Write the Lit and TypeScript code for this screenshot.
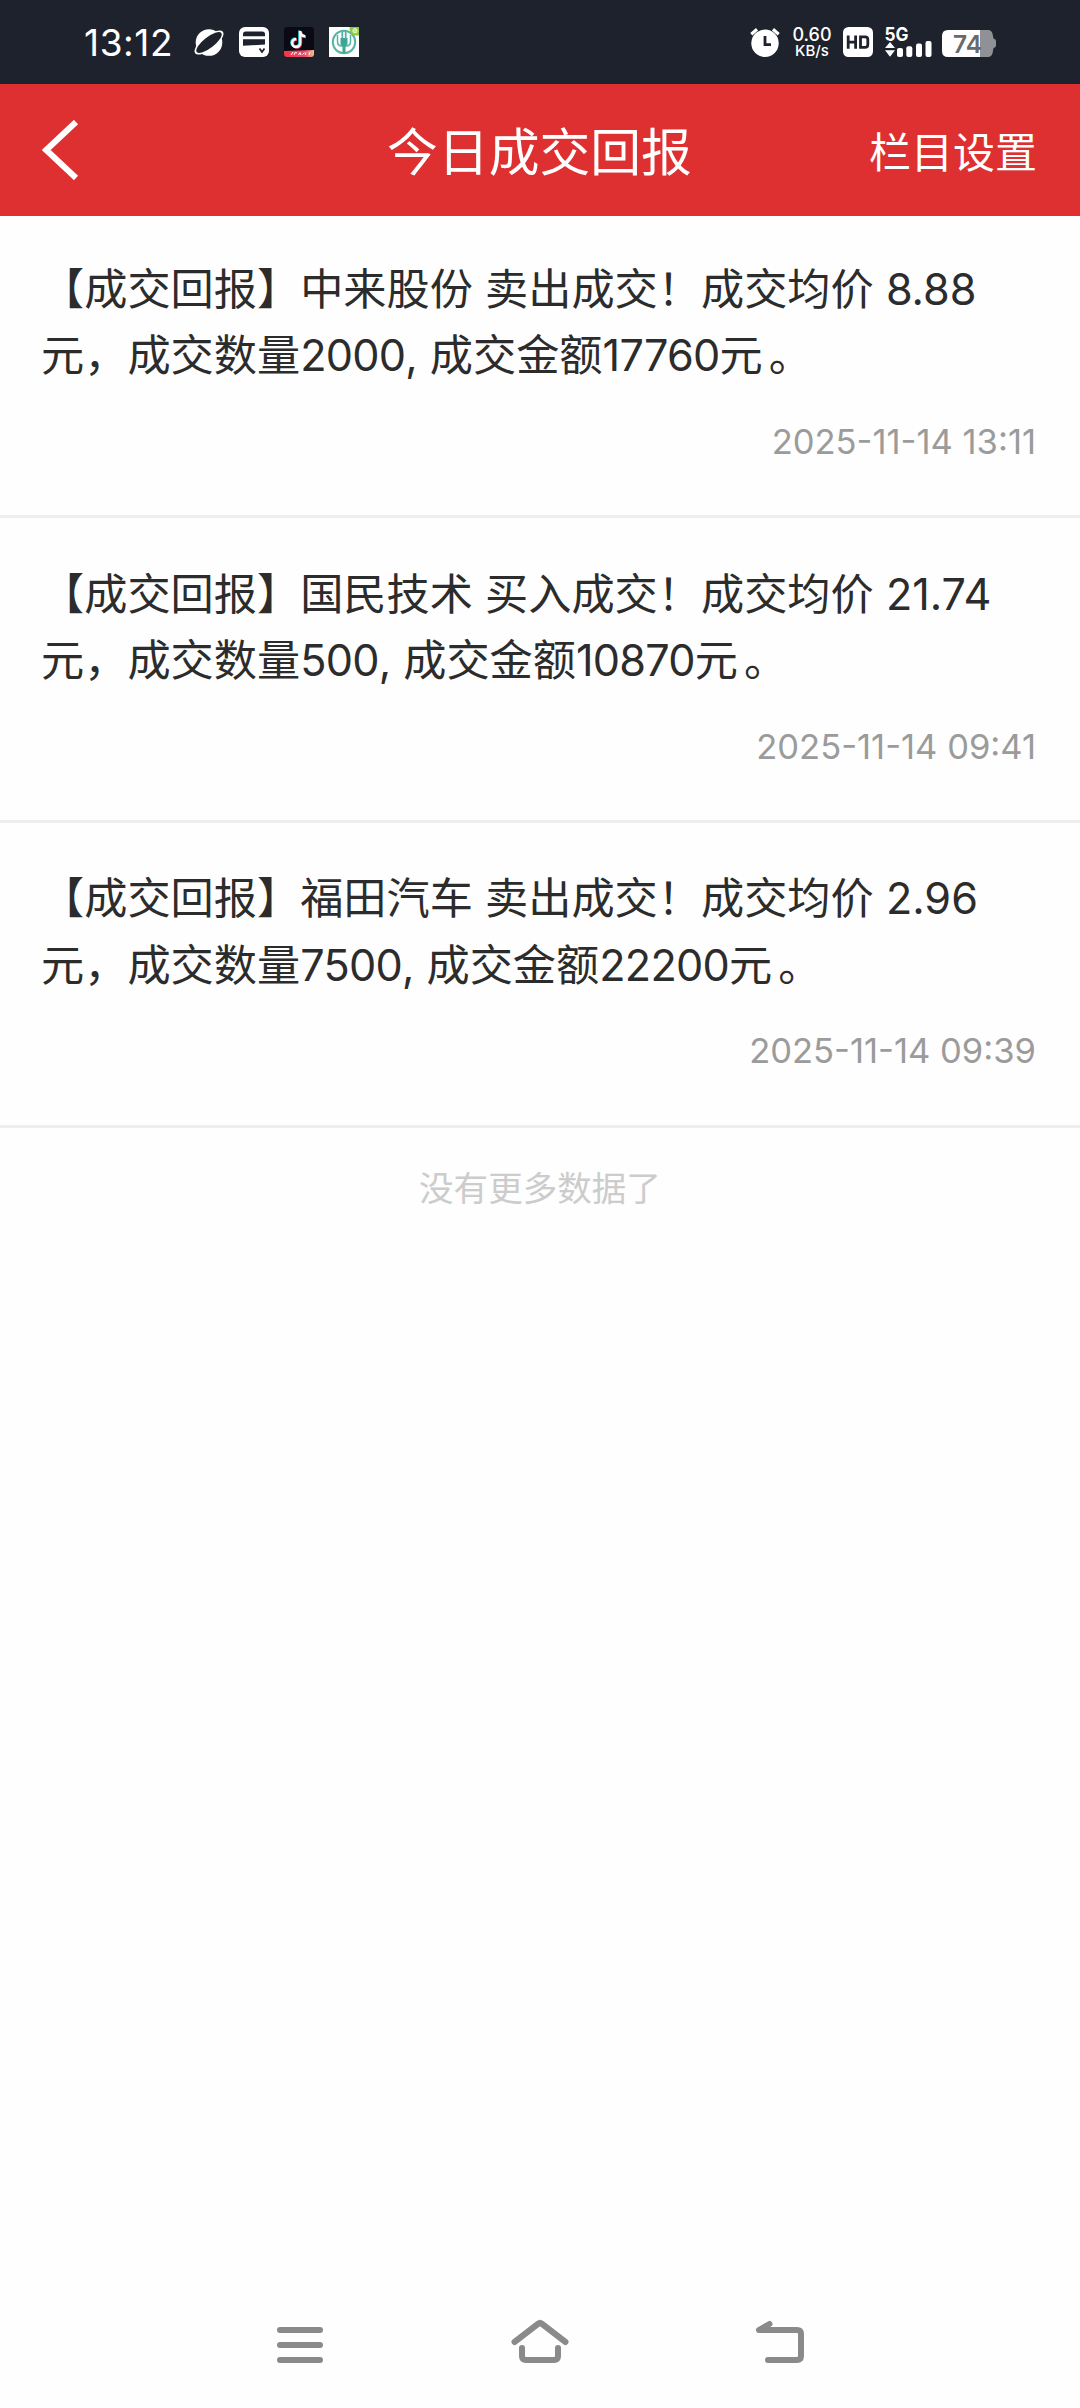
import { LitElement, html, css, svg } from "lit";
import { customElement, property } from "lit/decorators.js";

interface Deal {
  first: string;
  price: string;
  qty: string;
  amount: string;
  time: string;
}

const DEALS: Deal[] = [
  { first: "【成交回报】中来股份 卖出成交！成交均价", price: "8.88", qty: "2000", amount: "17760", time: "2025-11-14 13:11" },
  { first: "【成交回报】国民技术 买入成交！成交均价", price: "21.74", qty: "500", amount: "10870", time: "2025-11-14 09:41" },
  { first: "【成交回报】福田汽车 卖出成交！成交均价", price: "2.96", qty: "7500", amount: "22200", time: "2025-11-14 09:39" },
];

@customElement("status-bar")
export class StatusBar extends LitElement {
  static styles = css`
    :host {
      display: flex;
      align-items: flex-start;
      justify-content: space-between;
      box-sizing: border-box;
      height: 84px;
      padding: 27px 84px 0 84px;
      background: #1e222c;
      color: #fff;
      font-family: Inter, "Noto Sans CJK SC", sans-serif;
    }
    svg { display: block; flex: none; overflow: visible; }
    .left, .right { display: flex; align-items: flex-start; }
    .left { gap: 15px; }
    .clock { width: 95px; font-size: 37px; line-height: 31px; white-space: nowrap; letter-spacing: 0.6px; }
    .speed { width: 40px; margin-left: 12px; text-align: center; font-weight: 500; white-space: nowrap; }
    .num { font-size: 18px; line-height: 15px; }
    .unit { font-size: 15px; line-height: 18px; }
    .hd { margin-left: 11px; }
    .net { margin-left: 12px; }
    .bat { margin-left: 10px; }
  `;
  render() {
    return html`
      <div class="left">
        <div class="clock">13:12</div>
        <svg width="30" height="30" viewBox="0 0 30 30">
          <circle cx="15" cy="15.5" r="13.3" fill="#fff" />
          <ellipse cx="15" cy="15.5" rx="17.6" ry="6.8" transform="rotate(-38 15 15.5)" fill="#fff" />
          <ellipse cx="15" cy="15.5" rx="15.6" ry="5.4" transform="rotate(-38 15 15.5)" fill="#1e222c" />
        </svg>
        <svg width="30" height="30" viewBox="0 0 30 30">
          <rect width="30" height="30" rx="6" fill="#fff" />
          <path d="M4 9.3V7.2Q4 4.5 6.8 4.5H23.2Q26 4.5 26 7.2V9.3ZM4 12.2H26V17.6L4 18.8Z" fill="#1e222c" />
          <path d="M20.5 21.5L23 25L25.5 21.5" fill="none" stroke="#1e222c" stroke-width="1.8" />
        </svg>
        <svg width="30" height="30" viewBox="0 0 30 30">
          <defs>
            <clipPath id="app"><rect width="30" height="30" rx="3" /></clipPath>
            <linearGradient id="strip"><stop offset="0" stop-color="#f0354a" /><stop offset="0.7" stop-color="#ee4a6e" /><stop offset="1" stop-color="#f6c08a" /></linearGradient>
          </defs>
          <g clip-path="url(#app)">
            <rect width="30" height="30" fill="#0b0a14" />
            <g fill="none" stroke-width="2.4">
              <path d="M15.4 3.5V15.5A4 4 0 1 1 11.4 11.5M15.4 4Q16 8.5 20.5 8.8" stroke="#35e0dc" />
              <path d="M17 4.5V16.5A4 4 0 1 1 13 12.5M17 5Q17.6 9.8 22 10" stroke="#f23a5c" />
              <path d="M16.2 4V16A4 4 0 1 1 12.2 12M16.2 4.5Q16.8 9 21.3 9.4" stroke="#fff" />
            </g>
            <path d="M0 24L30 23V30H0Z" fill="url(#strip)" />
            <path d="M7 28L9 25M10 28L11 25.5L13 26M14.5 28L16 25.5L17 28M18.5 27.5L20.5 25.5M22 25.5L21 28M26 25L25 28" stroke="#fff" stroke-width="1" fill="none" />
          </g>
        </svg>
        <svg width="30" height="30" viewBox="0 0 30 30">
          <rect width="30" height="30" fill="#fff" />
          <circle cx="15" cy="15" r="11.2" fill="none" stroke="#54b5a3" stroke-width="2" />
          <path d="M8.5 8V14.5Q8.5 18.5 12 19H18Q21.5 18.5 21.5 14.5V8" fill="none" stroke="#54b5a3" stroke-width="1.5" />
          <path d="M13.3 4V12M16.7 4V12" stroke="#54b5a3" stroke-width="1.8" />
          <path d="M11.5 11H18.5V17Q18.5 18.5 16.5 19V26H13.5V19Q11.5 18.5 11.5 17Z" fill="#3fa594" />
          <path d="M20.5 0H30V8.500H24Q20.5 6 20.5 0Z" fill="#8ccb3c" />
          <circle cx="26" cy="3.8" r="2.2" fill="#c5e89b" stroke="#fff" stroke-width=".7" />
        </svg>
      </div>
      <div class="right">
        <svg width="30" height="30" viewBox="0 0 30 30">
          <circle cx="15" cy="16.3" r="13.7" fill="#fff" />
          <path d="M1.3 7.2L7 2.3M28.7 7.2L23 2.3" stroke="#fff" stroke-width="3.2" />
          <path d="M15 9V17.6H21" fill="none" stroke="#1e222c" stroke-width="2.8" />
        </svg>
        <div class="speed"><div class="num">0.60</div><div class="unit">KB/s</div></div>
        <svg class="hd" width="30" height="30" viewBox="0 0 30 30">
          <rect width="30" height="30" rx="5.5" fill="#fff" />
          <path d="M5.2 8.5V21.800M12.6 8.5V21.8M5.2 15.2H12.6M17.5 9.9H22Q24.8 9.9 24.8 12.5V17.8Q24.8 20.4 22 20.4H17.5Z" fill="none" stroke="#1e222c" stroke-width="2.8" />
        </svg>
        <svg class="net" width="47" height="30" viewBox="0 0 47 30" fill="#fff">
          <text x="-0.5" y="14" font-size="18.5" font-weight="700" font-family="Inter" textLength="24" lengthAdjust="spacingAndGlyphs">5G</text>
          <path d="M0 21L5 15L10 21ZM0 23.2H10L5 29.7Z" />
          <rect x="12" y="21" width="6" height="9" rx="2" /><rect x="21.3" y="19.3" width="6" height="10.7" rx="2" />
          <rect x="31" y="16.5" width="6" height="13.5" rx="2" /><rect x="40.5" y="14" width="6" height="16" rx="2" />
        </svg>
        <svg class="bat" width="54" height="30" viewBox="0 0 54 30">
          <path d="M38 3H46Q50 3 50.8 8L51.5 11.5Q54 12 54 14V18.5Q54 20.5 51.5 21L50.8 25Q50 30 46 30H38Z" fill="#8f9196" />
          <path d="M38 3H6Q0 3 0 9V24Q0 30 6 30H38Z" fill="#fff" />
          <text x="11" y="26" font-size="24.5" font-weight="600" font-family="Inter" fill="#6a6a6a" textLength="29" lengthAdjust="spacingAndGlyphs">74</text>
        </svg>
      </div>
    `;
  }
}

@customElement("title-bar")
export class TitleBar extends LitElement {
  static styles = css`
    :host {
      display: grid;
      grid-template-columns: 1fr auto 1fr;
      align-items: center;
      box-sizing: border-box;
      height: 132px;
      padding: 0 43px 0 42px;
      background: #de3031;
      color: #fff;
      font-family: Inter, "Noto Sans CJK SC", sans-serif;
    }
    svg { display: block; }
    .title { font-size: 50.8px; line-height: 74px; padding-top: 5px; }
    .action { justify-self: end; font-size: 42px; line-height: 62px; padding-top: 5px; }
  `;
  render() {
    return html`
      <svg width="40" height="60" viewBox="0 0 40 60"><path d="M34 2L4.2 30L34 58" fill="none" stroke="#fff" stroke-width="6" /></svg>
      <div class="title">今日成交回报</div>
      <div class="action">栏目设置</div>
    `;
  }
}

@customElement("deal-item")
export class DealItem extends LitElement {
  @property({ attribute: false }) deal!: Deal;
  static styles = css`
    :host {
      display: flex;
      flex-direction: column;
      box-sizing: border-box;
      height: 304.7px;
      padding: 42.5px 44px 0 41px;
      border-bottom: 3px solid #eee;
      font-family: Inter, "Noto Sans CJK SC", sans-serif;
    }
    .text { font-size: 43.2px; line-height: 66.2px; color: #2c2c2c; }
    .line { white-space: nowrap; }
    .n { letter-spacing: -0.75px; }
    .stop { padding-left: 6px; }
    .time { align-self: flex-end; margin-top: 29.5px; font-size: 34.56px; line-height: 48px; color: #9b9b9b; white-space: nowrap; }
  `;
  render() {
    const d = this.deal;
    return html`
      <div class="text">
        <div class="line">${d.first} ${d.price}</div>
        <div class="line">元，成交数量<span class="n">${d.qty}</span>, 成交金额<span class="n">${d.amount}</span>元<span class="stop">。</span></div>
      </div>
      <div class="time">${d.time}</div>
    `;
  }
}

@customElement("nav-bar")
export class NavBar extends LitElement {
  static styles = css`
    :host { display: flex; justify-content: space-between; height: 100px; padding: 0 270px; }
    svg { display: block; margin-top: 4px; }
  `;
  render() {
    const icon = (d: string) => html`<svg width="60" height="60" viewBox="0 0 60 60" fill="none" stroke="#8a8a8a" stroke-width="6" stroke-linecap="round" stroke-linejoin="round">${svg`<path d=${d} />`}</svg>`;
    return html`
      ${icon("M10 18H50M10 33H50M10 48H50")}
      ${icon("M4.5 30L28.5 11.5Q30 10.2 31.5 11.5L55.5 30M12 36V44Q12 48 16 48H44Q48 48 48 44V36")}
      ${icon("M19.5 12L9 18H47Q51 18 51 22V44Q51 48 47 48H18")}
    `;
  }
}

@customElement("app-root")
export class AppRoot extends LitElement {
  static styles = css`
    :host {
      display: flex;
      flex-direction: column;
      height: 2408px;
      background: #fefefe;
      overflow: hidden;
    }
    .list { flex: 1; margin-top: -2.5px; }
    .bar { position: relative; z-index: 1; }
    .end {
      padding-top: 36px;
      text-align: center;
      font: 34.56px/50px Inter, "Noto Sans CJK SC", sans-serif;
      color: #ccc;
    }
  `;
  render() {
    return html`
      <status-bar></status-bar>
      <title-bar class="bar"></title-bar>
      <div class="list">
        ${DEALS.map((d) => html`<deal-item .deal=${d}></deal-item>`)}
        <div class="end">没有更多数据了</div>
      </div>
      <nav-bar></nav-bar>
    `;
  }
}
